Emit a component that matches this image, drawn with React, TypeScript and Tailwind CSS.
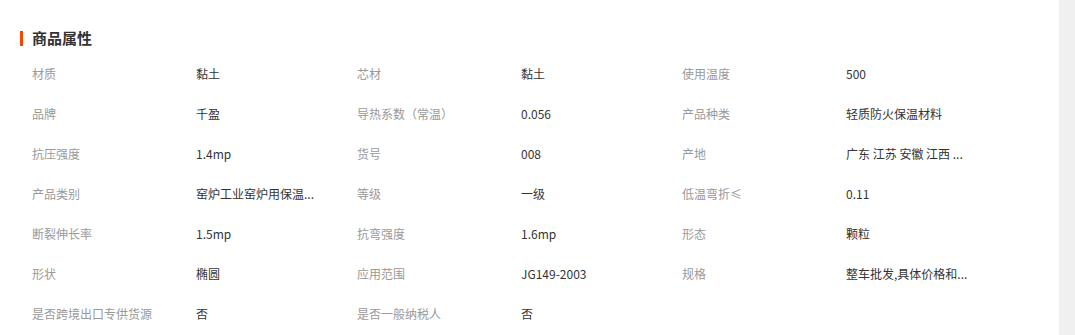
import React from 'react';

const attrs: [string, string][] = [
  ['材质', '黏土'],
  ['芯材', '黏土'],
  ['使用温度', '500'],
  ['品牌', '千盈'],
  ['导热系数（常温）', '0.056'],
  ['产品种类', '轻质防火保温材料'],
  ['抗压强度', '1.4mp'],
  ['货号', '008'],
  ['产地', '广东 江苏 安徽 江西 ...'],
  ['产品类别', '窑炉工业窑炉用保温...'],
  ['等级', '一级'],
  ['低温弯折≤', '0.11'],
  ['断裂伸长率', '1.5mp'],
  ['抗弯强度', '1.6mp'],
  ['形态', '颗粒'],
  ['形状', '椭圆'],
  ['应用范围', 'JG149-2003'],
  ['规格', '整车批发,具体价格和...'],
  ['是否跨境出口专供货源', '否'],
  ['是否一般纳税人', '否'],
];

const font = { fontFamily: '"Noto Sans CJK SC", "Noto Sans", sans-serif' };

export default function App() {
  return (
    <div className="flex w-[1075px] h-[335px] bg-[#f0f0f0] overflow-hidden" style={font}>
      <div className="w-[1059px] h-full bg-white pl-5 pt-[29px]">
        <div className="flex items-center h-[18px]">
          <span className="w-[3px] h-[15px] bg-[#ff4400]" />
          <h3 className="ml-[9px] text-[15px] font-bold text-[#333] leading-[18px]">商品属性</h3>
        </div>
        <div className="grid grid-cols-[325px_325px_325px] pl-3 mt-[7px]">
          {attrs.map(([k, v]) => (
            <div key={k} className="flex items-center h-10 text-[12px]">
              <span className="w-[164px] text-[#999] whitespace-nowrap">{k}</span>
              <span className="w-[161px] text-[#333] whitespace-nowrap overflow-hidden">{v}</span>
            </div>
          ))}
        </div>
      </div>
    </div>
  );
}
